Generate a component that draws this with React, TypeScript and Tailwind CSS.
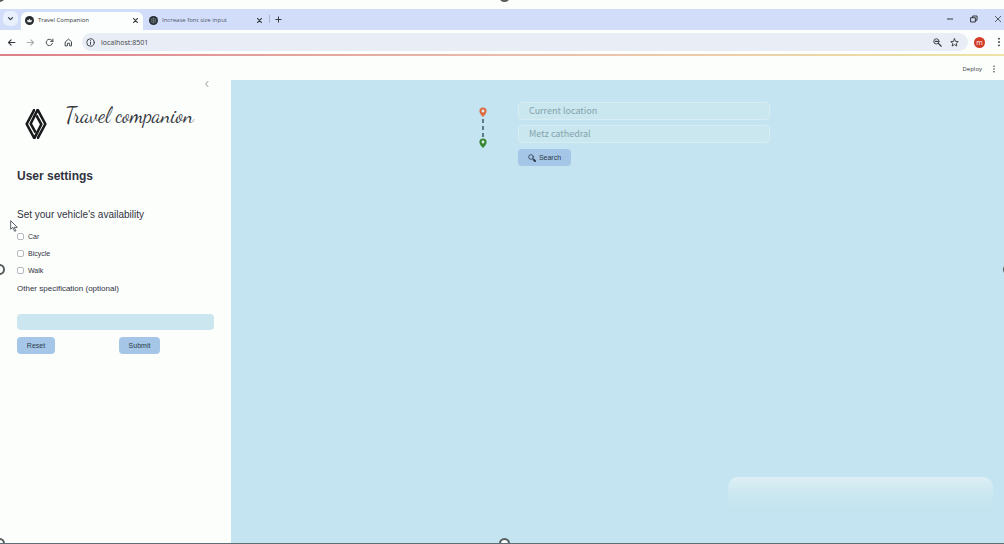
import React, { useState } from "react";

type IconProps = { className?: string; children: React.ReactNode; box?: string };

function Glyph({ className = "", children, box = "0 0 24 24" }: IconProps) {
  return (
    <svg
      viewBox={box}
      fill="none"
      stroke="currentColor"
      strokeWidth="2.4"
      strokeLinecap="round"
      strokeLinejoin="round"
      aria-hidden="true"
      className={`shrink-0 ${className}`}
    >
      {children}
    </svg>
  );
}

const Close = ({ className = "size-[7px]" }: { className?: string }) => (
  <Glyph className={className}>
    <path d="M5 5l14 14M19 5L5 19" strokeWidth="3.6" />
  </Glyph>
);

const Dots = ({ className = "size-3" }: { className?: string }) => (
  <Glyph className={className}>
    <g fill="currentColor" stroke="none">
      <circle cx="12" cy="4" r="2.2" />
      <circle cx="12" cy="12" r="2.2" />
      <circle cx="12" cy="20" r="2.2" />
    </g>
  </Glyph>
);

function TabBar() {
  return (
    <div className="flex h-[21px] items-end bg-[#d2def9] pl-[3px]">
      <button aria-label="Search tabs" className="mb-1 flex size-[15px] items-center justify-center rounded-md bg-[#e9f0fd]">
        <Glyph className="size-[7px]">
          <path d="M5 9l7 7 7-7" strokeWidth="4" />
        </Glyph>
      </button>
      <div className="ml-[3px] flex h-[18px] w-[122px] items-center rounded-t-md bg-[#fcfefd] px-1 pb-[2px]">
        <svg viewBox="0 0 20 20" className="size-[9px] shrink-0" aria-hidden="true">
          <circle cx="10" cy="10" r="10" fill="#252b2e" />
          <path d="M4 8l3 2 3-4 3 4 3-2-2 6H6z" fill="#edf1f1" />
        </svg>
        <span className="ml-1 grow text-[6px] leading-none font-medium text-[#33383c]">Travel Companion</span>
        <button aria-label="Close tab">
          <Close />
        </button>
      </div>
      <div className="flex h-[18px] w-[124px] items-center pr-1 pb-[2px] pl-[6px]">
        <svg viewBox="0 0 20 20" className="size-[9px] shrink-0" aria-hidden="true">
          <circle cx="10" cy="10" r="10" fill="#222c32" />
          <g fill="none" stroke="#84918f" strokeWidth="1.2">
            <path d="M10 4l5 3v6l-5 3-5-3V7z" />
            <path d="M10 4v6l5 3M5 7l5 3-5 3M10 16v-6l5-3" />
          </g>
        </svg>
        <span className="ml-1 grow text-[6px] leading-none font-medium text-[#4c5668]">Increase font size input</span>
        <button aria-label="Close tab">
          <Close />
        </button>
      </div>
      <div className="mb-[7px] ml-[2px] h-2 w-px bg-[#abb7cf]" />
      <button aria-label="New tab" className="mb-[7px] ml-[5px]">
        <Glyph className="size-[7px]">
          <path d="M12 3v18M3 12h18" strokeWidth="3.4" />
        </Glyph>
      </button>
      <div className="mb-[7px] ml-auto flex items-center gap-4">
        <button aria-label="Minimize">
          <Glyph className="size-2">
            <path d="M4 12h16" strokeWidth="3" />
          </Glyph>
        </button>
        <button aria-label="Restore">
          <Glyph className="size-2">
            <path d="M3 8h13v13H3zM8 8V3h13v13h-5" strokeWidth="3" />
          </Glyph>
        </button>
        <button aria-label="Close window" className="mr-[2px]">
          <Glyph className="size-2">
            <path d="M4 4l16 16M20 4L4 20" />
          </Glyph>
        </button>
      </div>
    </div>
  );
}

function Toolbar() {
  return (
    <div className="flex h-6 items-center bg-[#fcfefd] pl-[7px]">
      <div className="flex items-center gap-[10px]">
        <button aria-label="Back">
          <Glyph className="size-[9px]">
            <path d="M21 12H5M11 5l-7 7 7 7" strokeWidth="3" />
          </Glyph>
        </button>
        <button aria-label="Forward" className="text-[#a9adaf]">
          <Glyph className="size-[9px]">
            <path d="M3 12h16M13 5l7 7-7 7" strokeWidth="3" />
          </Glyph>
        </button>
        <button aria-label="Reload">
          <Glyph className="size-[9px]">
            <path d="M20 14a8.500 8.500 0 1 1-2-8l3 3M21 3v6h-6" />
          </Glyph>
        </button>
        <button aria-label="Home">
          <Glyph className="size-[9px]">
            <path d="M4 10l8-7 8 7v11h-5v-7H9v7H4z" />
          </Glyph>
        </button>
      </div>
      <div className="ml-[9px] flex h-[18px] grow items-center rounded-full bg-[#e9eef6] pr-[9px] pl-1">
        <Glyph className="size-[9px]">
          <circle cx="12" cy="12" r="10" />
          <path d="M12 11v6M12 7v.2" />
        </Glyph>
        <input
          aria-label="Address"
          defaultValue="localhost:8501"
          className="ml-[6px] min-w-0 grow bg-transparent text-[7px] leading-none text-[#3d4246] outline-none"
        />
        <Glyph className="size-[9px]">
          <circle cx="9" cy="9" r="7" />
          <path d="M14 14l8 8M6 9h6" strokeWidth="3" />
        </Glyph>
        <button aria-label="Bookmark" className="ml-2">
          <Glyph className="size-[9px]">
            <path d="M12 2l3 7 7 .6-5.400 4.700 1.700 7.200L12 17.600l-6.300 3.900 1.700-7.200L2 9.600 9 9z" />
          </Glyph>
        </button>
      </div>
      <button className="ml-[6px] flex size-[11px] items-center justify-center rounded-full bg-[#d13d27] text-[7px] leading-none text-white">
        m
      </button>
      <button aria-label="Browser menu" className="ml-[9px]">
        <Dots className="size-[10px]" />
      </button>
    </div>
  );
}

function Diamond() {
  return (
    <svg viewBox="0 0 66 90" className="h-[30px] w-[22px] shrink-0" aria-hidden="true">
      <g fill="none" stroke="#17191a" strokeWidth="7.500">
        <path d="M30 4 H27 L5 45 L27 86 H29 L49 46 L34 19" />
        <path d="M36 86 H39 L61 45 L39 4 H37 L17 44 L32 71" />
      </g>
    </svg>
  );
}

const actionButton = "rounded-[4px] bg-[#a6c6e7] text-[7px] leading-none text-[#29394c]";

function Sidebar() {
  const [vehicles, setVehicles] = useState<string[]>([]);
  const toggle = (name: string) =>
    setVehicles((old) => (old.includes(name) ? old.filter((v) => v !== name) : [...old, name]));

  return (
    <aside className="flex w-[231px] shrink-0 flex-col bg-[#fcfefc] px-[17px] font-['Liberation_Sans',sans-serif] text-[#31333f]">
      <button aria-label="Collapse sidebar" className="mt-6 mr-[3px] self-end text-[#777b80]">
        <Glyph className="size-2">
          <path d="M15 4l-7 8 7 8" />
        </Glyph>
      </button>
      <div className="mt-4 flex items-start pl-2">
        <div className="mt-[5px]">
          <Diamond />
        </div>
        <h1 className="ml-[18px] font-['Dancing_Script',cursive] text-[21px] leading-6 whitespace-nowrap text-[#34373c]">
          Travel companion
        </h1>
      </div>
      <h2 className="mt-[29px] text-[12px] leading-4 font-bold">User settings</h2>
      <form onReset={() => setVehicles([])} onSubmit={(e) => e.preventDefault()}>
        <fieldset className="mt-6">
          <legend className="text-[10px] leading-[14px]">Set your vehicle's availability</legend>
          <div className="mt-[10px] flex flex-col gap-[9px]">
            {["Car", "Bicycle", "Walk"].map((name) => (
              <label key={name} className="flex h-2 items-center gap-1 text-[7px] leading-none">
                <input
                  type="checkbox"
                  checked={vehicles.includes(name)}
                  onChange={() => toggle(name)}
                  className="size-[7px] appearance-none rounded-[2px] border border-[#b5b9bd] bg-white checked:bg-[#a6c6e7]"
                />
                {name}
              </label>
            ))}
          </div>
        </fieldset>
        <label htmlFor="other" className="mt-2 block text-[8px] leading-[14px]">
          Other specification (optional)
        </label>
        <input id="other" className="mt-[18px] block h-4 w-full rounded-[4px] bg-[#cbe6ef] px-2 text-[8px] outline-none" />
        <div className="mt-[7px] grid grid-cols-[102px_1fr] justify-items-start">
          <button type="reset" className={`h-[17px] w-[38px] ${actionButton}`}>
            Reset
          </button>
          <button type="submit" className={`h-[17px] w-[41px] ${actionButton}`}>
            Submit
          </button>
        </div>
      </form>
    </aside>
  );
}

function Route() {
  const pin = "M0-7a4.500 4.500 0 0 1 4.500 4.500C4.500 1 0 5 0 5S-4.500 1-4.500-2.500A4.500 4.500 0 0 1 0-7z";
  return (
    <svg viewBox="0 0 12 44" className="h-11 w-3 shrink-0" aria-hidden="true">
      <path d="M6 15v18" stroke="#354e58" strokeWidth="1.400" strokeDasharray="4 3" />
      <g transform="translate(6 9) scale(.8)">
        <path d={pin} fill="#dc6c40" />
        <circle cy="-2.500" r="1.800" fill="#e2eef0" />
      </g>
      <g transform="translate(6 40) scale(.8)">
        <path d={pin} fill="#36872f" />
        <circle cy="-2.500" r="1.800" fill="#e2eef0" />
      </g>
    </svg>
  );
}

const field =
  "h-[18px] w-full rounded-[4px] border border-[#d7edf3] bg-[#cae6ee] px-[10px] pb-[2px] font-['Noto_Sans_CJK_SC',sans-serif] text-[9px] leading-none placeholder:text-[#83a3ad] placeholder:opacity-100 outline-none";

function Planner() {
  return (
    <main className="relative grow bg-[#c3e4f0] pt-[22px]">
      <div className="mx-auto flex w-[305px] max-w-full items-start">
        <div className="w-[53px] shrink-0 pt-[2px] pl-3">
          <Route />
        </div>
        <form className="flex grow flex-col items-start gap-[5px]" onSubmit={(e) => e.preventDefault()}>
          <input aria-label="Start" placeholder="Current location" className={field} />
          <input aria-label="Destination" placeholder="Metz cathedral" className={field} />
          <button className="mt-px flex h-[17px] w-[53px] items-center justify-center gap-[3px] rounded-[4px] bg-[#a6c6e7] font-['Liberation_Sans',sans-serif] text-[7px] leading-none text-[#29394c]">
            <Glyph className="size-2">
              <circle cx="9" cy="9" r="7" />
              <path d="M15 15l1 1" />
              <path d="M17 17l4 4" strokeWidth="6" />
            </Glyph>
            Search
          </button>
        </form>
      </div>
      <div className="absolute right-[11px] bottom-2 h-[58px] w-[265px] rounded-t-[10px] bg-linear-to-b from-[#dceff5] via-[#c9e6ef] via-35% to-[#c3e4f0] to-60%" />
    </main>
  );
}

export default function App() {
  const handle = "absolute size-[11px] rounded-full border-2 border-[#555d5f] bg-[#fcfefc]";
  return (
    <div className="relative flex min-h-screen flex-col overflow-hidden border-b border-[#5d7077] bg-[#fcfefc] pt-[9px] font-['Open_Sans','Noto_Sans',sans-serif] text-[#34393d]">
      <TabBar />
      <Toolbar />
      <div className="h-[2px] bg-linear-to-r from-[#dc7f88] via-[#e8bcad] to-[#ece5a4]" />
      <div className="flex grow">
        <Sidebar />
        <div className="flex min-w-0 grow flex-col">
          <header className="flex h-6 items-center justify-end gap-2 pt-[2px] pr-[6px] text-[6px] leading-none font-medium">
            <button>Deploy</button>
            <button aria-label="App menu">
              <Dots className="size-2" />
            </button>
          </header>
          <Planner />
        </div>
      </div>
      <svg viewBox="0 0 12 18" className="absolute top-[220px] left-[10px] h-3 w-2" aria-hidden="true">
        <path d="M1 1v13l3-3 3 6 2-1-3-5h5z" fill="#fff" stroke="#50575c" strokeWidth="1.400" />
      </svg>
      <span className={`${handle} -top-[9px] left-1/2 -translate-x-[3px]`} />
      <span className={`${handle} -top-[9px] -left-[6px]`} />
      <span className={`${handle} top-1/2 -left-[6px] -translate-y-2`} />
      <span className={`${handle} top-1/2 -right-[10px] -translate-y-2`} />
      <span className={`${handle} -bottom-[6px] left-1/2 -translate-x-[3px]`} />
      <span className={`${handle} -bottom-[6px] -left-[6px]`} />
    </div>
  );
}
